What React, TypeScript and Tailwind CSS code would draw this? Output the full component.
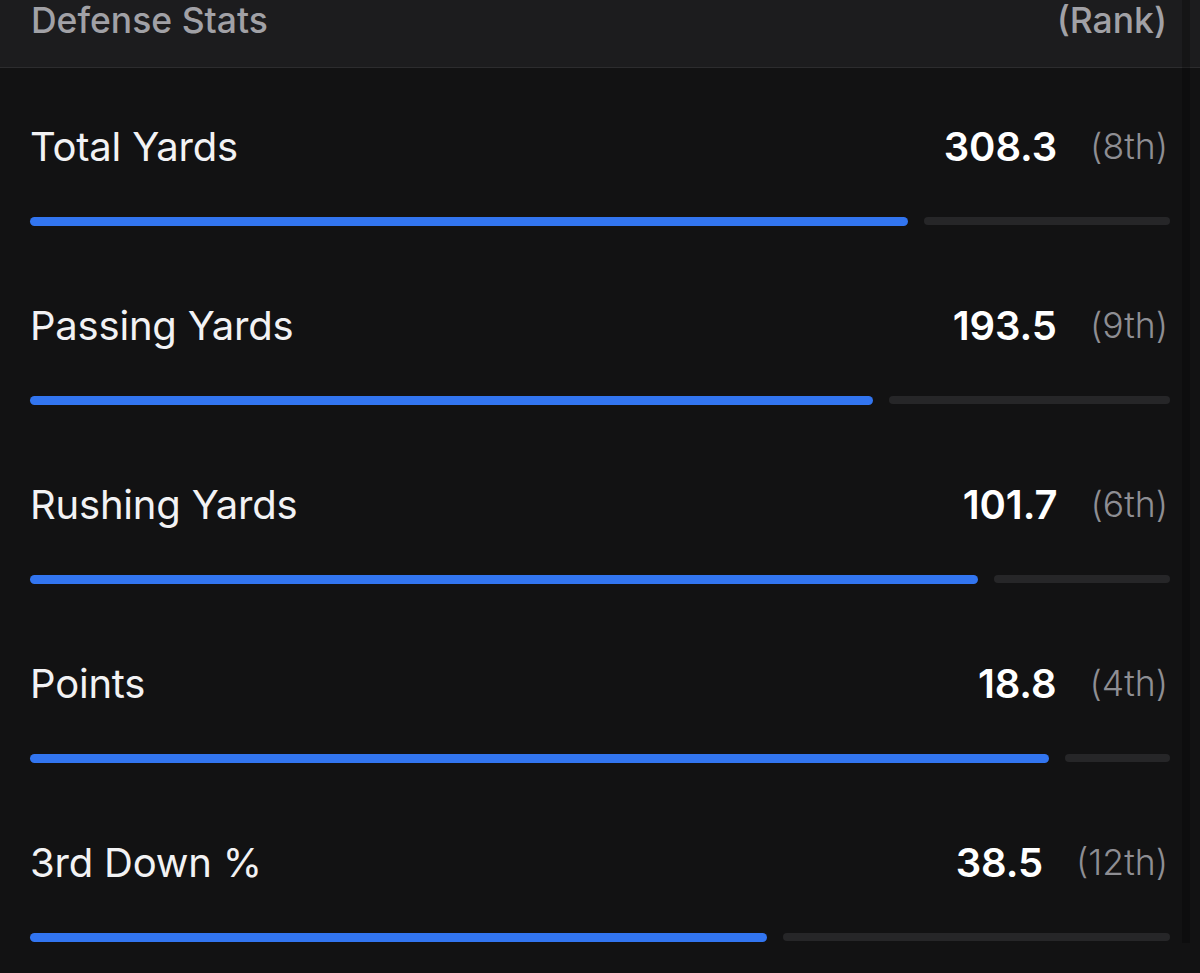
import React from "react";

interface Stat {
  label: string;
  value: string;
  rank: string;
  fill: number; // px width of the blue part
}

const STATS: Stat[] = [
  { label: "Total Yards", value: "308.3", rank: "(8th)", fill: 878 },
  { label: "Passing Yards", value: "193.5", rank: "(9th)", fill: 843 },
  { label: "Rushing Yards", value: "101.7", rank: "(6th)", fill: 948 },
  { label: "Points", value: "18.8", rank: "(4th)", fill: 1019 },
  { label: "3rd Down %", value: "38.5", rank: "(12th)", fill: 737 },
];

const font = { fontFamily: "Inter, 'Noto Sans', sans-serif" };

function StatRow({ stat }: { stat: Stat }) {
  return (
    <div className="pt-[57px] pb-[21px] pl-[30px] pr-[30px]">
      <div className="h-[44px] flex items-center justify-between leading-none">
        <span className="text-[40px] tracking-[-0.2px] text-[#f2f2f4]">{stat.label}</span>
        <div className="flex items-center gap-[33px]">
          <span className="text-[40px] font-semibold tracking-[-0.1px] text-white">{stat.value}</span>
          <span className="text-[35.5px] font-light text-[#8e8e93] pr-[2px]">{stat.rank}</span>
        </div>
      </div>
      <div className="mt-[48px] h-[9px] flex gap-[16px]">
        <div className="h-full rounded-full bg-[#3275f0]" style={{ width: stat.fill }} />
        <div className="h-[8px] flex-1 rounded-sm bg-[#262628]" />
      </div>
    </div>
  );
}

export default function App() {
  return (
    <div className="relative w-[1200px] h-[973px] bg-[#121213] overflow-hidden" style={font}>
      <div className="h-[68px] bg-[#1c1c1e] border-b border-[#2c2c2e] px-[31px] flex items-start justify-between">
        <span className="text-[35.5px] leading-[41px] font-medium text-[#a1a1a6]">Defense Stats</span>
        <span className="text-[35.5px] leading-[41px] font-medium text-[#a1a1a6] pr-[2px]">(Rank)</span>
      </div>
      {STATS.map((s) => (
        <StatRow key={s.label} stat={s} />
      ))}
      {/* faint scroll indicator strip */}
      <div className="absolute top-0 bottom-[30px] left-[1182px] w-[8px] bg-black/25" />
    </div>
  );
}
